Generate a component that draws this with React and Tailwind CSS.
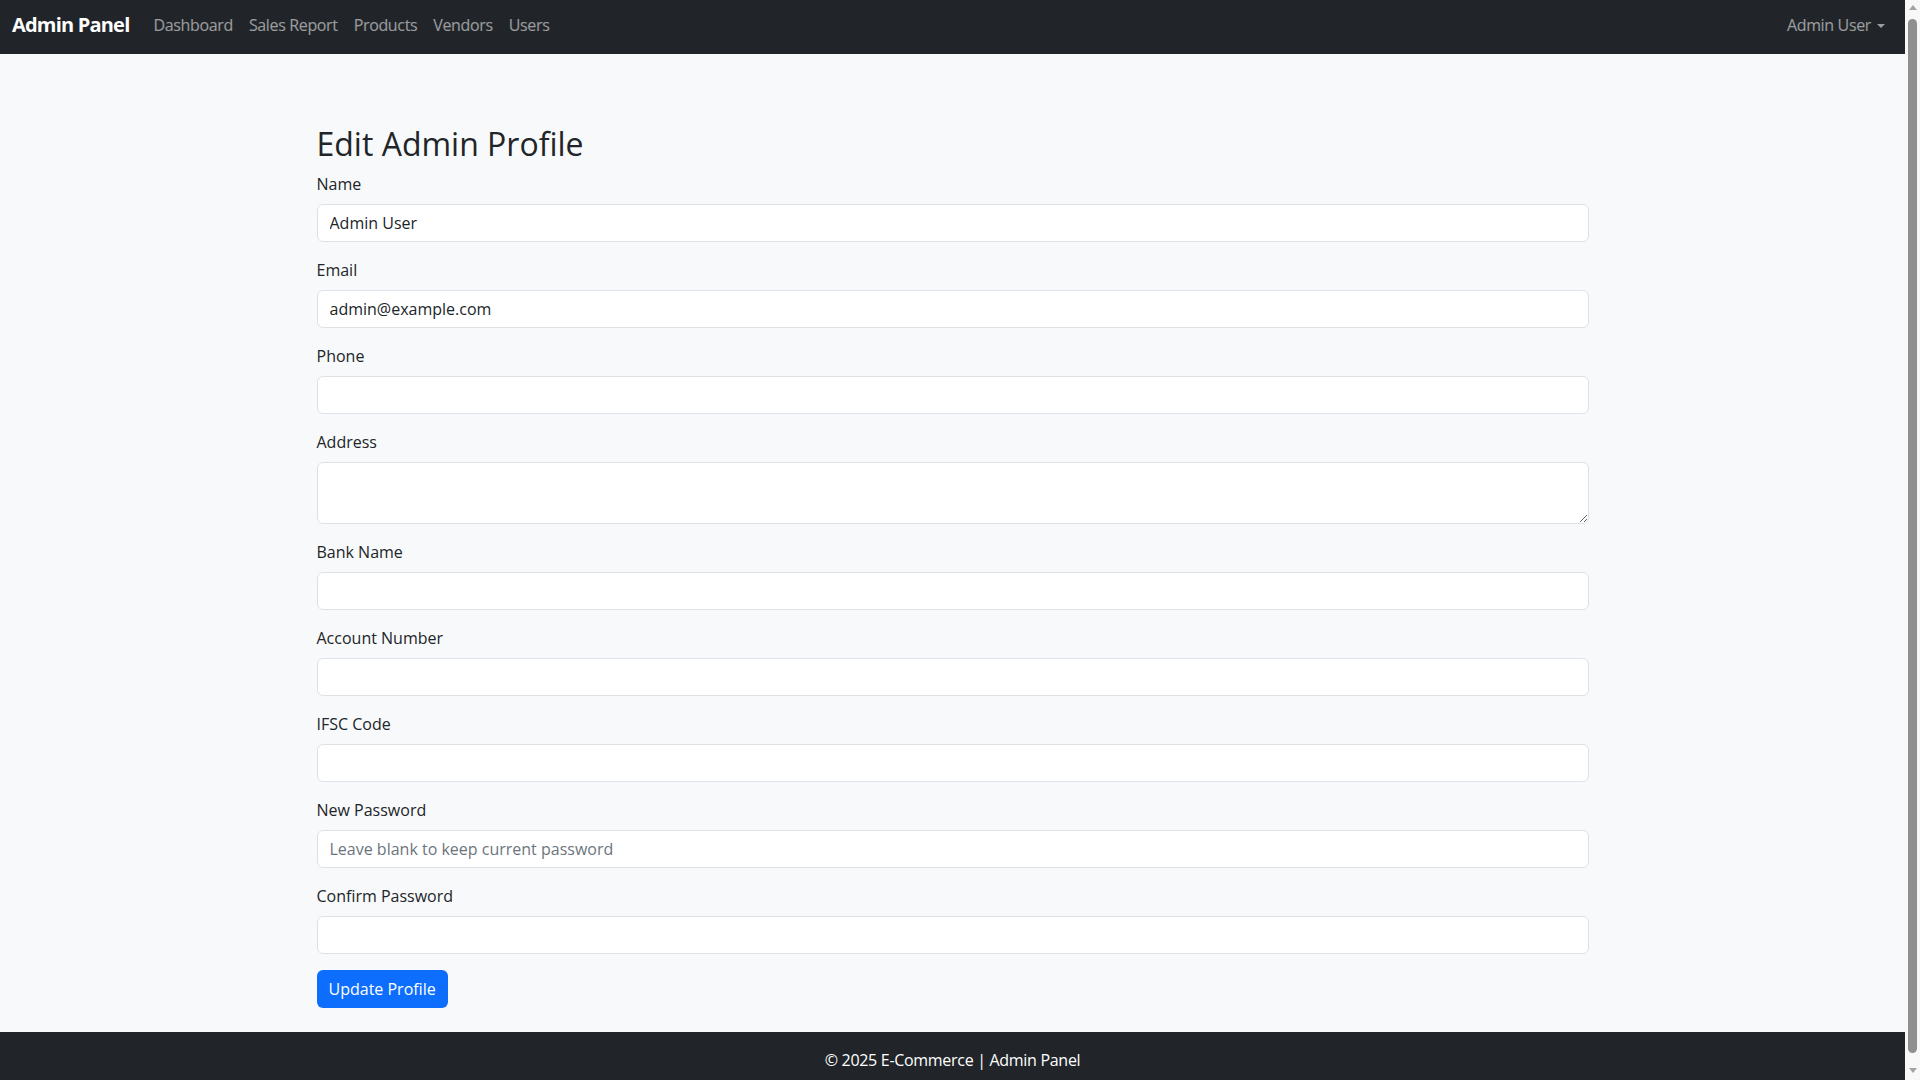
import React from 'react';

const fields = [
  { label: 'Name', value: 'Admin User' },
  { label: 'Email', value: 'admin@example.com' },
  { label: 'Phone', value: '' },
  { label: 'Address', value: '', textarea: true },
  { label: 'Bank Name', value: '' },
  { label: 'Account Number', value: '' },
  { label: 'IFSC Code', value: '' },
  { label: 'New Password', value: '', placeholder: 'Leave blank to keep current password' },
  { label: 'Confirm Password', value: '' },
];

const navLinks = ['Dashboard', 'Sales Report', 'Products', 'Vendors', 'Users'];

const inputCls =
  'block w-full bg-white border border-[#dee2e6] rounded-[6px] px-3 text-base leading-6 text-[#212529] placeholder:text-[#6c757d] focus:outline-none';

// Classic browser scrollbar look (page is a little taller than the window)
const FakeScrollbar = () => (
  <div className="fixed top-0 right-0 w-[15px] h-screen bg-[#f8f8f8] flex flex-col items-center">
    <span className="mt-[5px] w-0 h-0 border-b-[5px] border-b-[#a3a3a3] border-x-[4px] border-x-transparent" />
    <span className="mt-[9px] w-[9px] flex-1 rounded-full bg-[#8f8f8f]" />
    <span className="mt-[15px] mb-[7px] w-0 h-0 border-t-[5px] border-t-[#a3a3a3] border-x-[4px] border-x-transparent" />
  </div>
);

const App = () => {
  return (
    <div className="min-h-screen pr-[15px] bg-[#f8f8f8]">
      <div className="min-h-screen flex flex-col bg-[#f8f9fa] text-[#212529] font-['Open_Sans',sans-serif]">
        {/* Navbar */}
        <nav className="h-[54px] bg-[#212529] flex items-center justify-between pl-3 pr-[12px] pb-1">
          <div className="flex items-center">
            <a className="text-white text-[20px] font-bold leading-[30px] tracking-[-0.8px] mr-4">Admin Panel</a>
            <div className="flex items-center">
              {navLinks.map(l => (
                <a key={l} className="px-2 text-base leading-6 tracking-[-0.35px] text-white/55">{l}</a>
              ))}
            </div>
          </div>
          <a className="px-2 flex items-center text-base leading-6 tracking-[-0.35px] text-white/55">
            Admin User
            <span className="ml-[6px] mt-[2px] w-0 h-0 border-t-[4px] border-t-white/55 border-x-[4px] border-x-transparent" />
          </a>
        </nav>

        {/* Main */}
        <main className="flex-1 pt-[71px] pb-6">
          <div className="w-[1272px] mx-auto">
            <h2 className="text-[32px] leading-[38.4px] font-medium mb-[9px]">Edit Admin Profile</h2>
            <form onSubmit={e => e.preventDefault()}>
              {fields.map(f => (
                <div key={f.label} className="mb-4">
                  <label className="block text-base leading-6 mb-2">{f.label}</label>
                  {f.textarea ? (
                    <textarea rows={2} className={`${inputCls} h-[62px] py-[6px]`} />
                  ) : (
                    <input type="text" defaultValue={f.value} placeholder={f.placeholder}
                      className={`${inputCls} h-[38px]`} />
                  )}
                </div>
              ))}
              <button type="submit"
                className="h-[38px] px-3 rounded-[6px] bg-[#0d6efd] text-white text-base leading-6">
                Update Profile
              </button>
            </form>
          </div>
        </main>

        {/* Footer */}
        <footer className="bg-[#212529] py-4 text-center text-white text-base leading-6 tracking-[-0.3px]">
          © 2025 E-Commerce | Admin Panel
        </footer>
      </div>
      <FakeScrollbar />
    </div>
  );
};

export default App;
